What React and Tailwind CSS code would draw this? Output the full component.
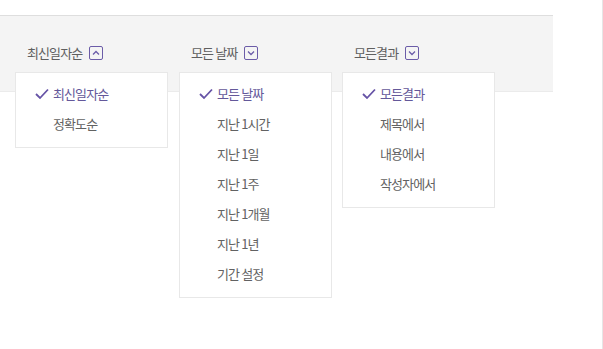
import React from "react";

const filters = [
  { label: "최신일자순", open: true, items: ["최신일자순", "정확도순"] },
  {
    label: "모든 날짜",
    open: false,
    items: ["모든 날짜", "지난 1시간", "지난 1일", "지난 1주", "지난 1개월", "지난 1년", "기간 설정"],
  },
  { label: "모든결과", open: false, items: ["모든결과", "제목에서", "내용에서", "작성자에서"] },
];

function ArrowBox({ up }) {
  return (
    <span className="flex h-[14px] w-[14px] items-center justify-center rounded-[2px] border border-[#6b5ca8]">
      <svg width="8" height="6" viewBox="0 0 8 6" fill="none">
        <path
          d={up ? "M1 4.5 L4 1.5 L7 4.5" : "M1 1.5 L4 4.5 L7 1.5"}
          stroke="#6b5ca8"
          strokeWidth="1.3"
        />
      </svg>
    </span>
  );
}

function Check() {
  return (
    <svg width="14" height="11" viewBox="0 0 14 11" fill="none" className="absolute left-[19px] top-1/2 -translate-y-1/2">
      <path d="M1 5.5 L5 9.5 L13 1" stroke="#6653a6" strokeWidth="1.8" />
    </svg>
  );
}

function FilterDropdown({ filter }) {
  return (
    <div className="relative w-[153px] last:-ml-px">
      <div className="flex h-5 items-center gap-[7px] pl-3 text-[#5f5f5f]">
        <span>{filter.label}</span>
        <ArrowBox up={filter.open} />
      </div>
      <ul className="absolute left-0 top-[29px] z-10 w-[153px] border border-[#e8e8e8] bg-white pt-[6px] pb-[8px]">
        {filter.items.map((item, i) => (
          <li
            key={item}
            className={`relative flex h-[30px] items-center pl-[37px] ${
              i === 0 ? "text-[#64589a]" : "text-[#626262]"
            }`}
          >
            {i === 0 && <Check />}
            {item}
          </li>
        ))}
      </ul>
    </div>
  );
}

export default function App() {
  return (
    <div
      className="h-[349px] w-[603px] border-r border-[#e6e6e6] bg-white text-[13px] tracking-[-0.9px]"
      style={{ fontFamily: '"Noto Sans CJK KR", "Noto Sans", sans-serif' }}
    >
      <div className="h-[15px]" />
      <div className="h-[77px] w-[553px] border-t border-b border-t-[#dedede] border-b-[#ebebeb] bg-[#f4f4f4]">
        <div className="flex gap-[11px] pl-[15px] pt-[27px]">
          {filters.map((f) => (
            <FilterDropdown key={f.label} filter={f} />
          ))}
        </div>
      </div>
    </div>
  );
}
